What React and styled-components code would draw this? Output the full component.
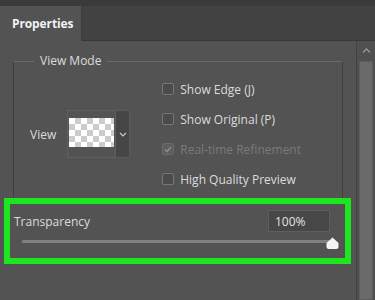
import React from "react";
import styled, { createGlobalStyle } from "styled-components";

const GlobalStyle = createGlobalStyle`
  html, body { margin: 0; padding: 0; background: #535353; }
  body { font-family: "Open Sans", "Noto Sans", sans-serif; }
`;

const Root = styled.div`
  width: 375px;
  height: 300px;
  display: flex;
  flex-direction: column;
  overflow: hidden;
  background: #535353;
  font-family: "Open Sans", "Noto Sans", sans-serif;
  font-size: 12px;
  color: #dcdcdc;
`;

const TopStrip = styled.div`
  height: 6px;
  background: #3a3a3a;
`;

const TabBar = styled.div`
  height: 34px;
  background: #424242;
  border-bottom: 1px solid #383838;
  display: flex;
  align-items: stretch;
`;

const Tab = styled.div`
  width: 82px;
  margin-bottom: -1px;
  background: #535353;
  border-right: 1px solid #3c3c3c;
  display: flex;
  align-items: center;
  padding-left: 12px;
  box-sizing: border-box;
  font-weight: 700;
  font-size: 12px;
  color: #f2f2f2;
  letter-spacing: -0.1px;
`;

const Body = styled.div`
  flex: 1;
  display: flex;
  min-height: 0;
`;

const Content = styled.div`
  flex: 1;
  display: flex;
  flex-direction: column;
  padding-top: 12px;
`;

const Group = styled.fieldset`
  margin: 0 13px 0 13px;
  padding: 0 0 4px 0;
  border: 1px solid #3f3f3f;
  border-top-color: #6a6a6a;
  border-bottom: none;
  min-width: 0;
`;

const Legend = styled.legend`
  margin-left: 20px;
  padding: 0 6px;
  line-height: 16px;
  color: #dcdcdc;
  font-size: 12px;
`;

const GroupInner = styled.div`
  display: flex;
  align-items: center;
  padding: 5px 0 0 16px;
`;

const ViewGroup = styled.div`
  display: flex;
  align-items: center;
  gap: 11px;
`;

const Label = styled.span`
  color: ${(p) => (p.$disabled ? "#7a7a7a" : "#dcdcdc")};
  white-space: nowrap;
`;

const Preview = styled.div`
  display: flex;
  height: 48px;
`;

const Thumb = styled.div`
  width: 49px;
  box-sizing: border-box;
  border: 1px solid #5f5f5f;
  padding: 7px 1px 10px 1px;
  display: flex;
`;

const Checker = styled.div`
  flex: 1;
  background-color: #ffffff;
  background-image: conic-gradient(#cccccc 25%, transparent 0 50%, #cccccc 0 75%, transparent 0);
  background-size: 12px 12px;
`;

const DropButton = styled.div`
  width: 14px;
  box-sizing: border-box;
  background: #464646;
  border: 1px solid #5a5a5a;
  border-left: none;
  display: flex;
  align-items: center;
  justify-content: center;
`;

const CheckList = styled.div`
  margin-left: 32px;
  display: flex;
  flex-direction: column;
`;

const CheckRow = styled.div`
  height: 30px;
  display: flex;
  align-items: center;
  gap: 6px;
`;

const Box = styled.span`
  width: 12px;
  height: 12px;
  box-sizing: border-box;
  border-radius: 2px;
  border: 1px solid ${(p) => (p.$disabled ? "#6a6a6a" : "#767676")};
  background: ${(p) => (p.$disabled ? "#5e5e5e" : "#4b4b4b")};
  display: flex;
  align-items: center;
  justify-content: center;
`;

const Highlight = styled.div`
  margin: 0 5px 0 4px;
  border: 6px solid #1ee61e;
  padding: 6px 12px 9px 4px;
  display: flex;
  flex-direction: column;
  gap: 5px;
`;

const TransRow = styled.div`
  display: flex;
  align-items: center;
  justify-content: space-between;
  padding-right: 3px;
`;

const ValueInput = styled.div`
  width: 62px;
  height: 22px;
  box-sizing: border-box;
  background: #474747;
  border: 1px solid #5e5e5e;
  padding-left: 6px;
  display: flex;
  align-items: center;
  color: #e4e4e4;
`;

const Slider = styled.div`
  position: relative;
  height: 12px;
  margin-left: 8px;
`;

const Track = styled.div`
  position: absolute;
  left: 0;
  right: 0;
  top: 3px;
  height: 3px;
  background: #808080;
  border-radius: 1px;
`;

const Handle = styled.svg`
  position: absolute;
  right: -6px;
  top: 0;
`;

const Scrollbar = styled.div`
  width: 19px;
  box-sizing: border-box;
  border-left: 1px solid #424242;
  background: #505050;
  display: flex;
  flex-direction: column;
  align-items: center;
  padding-top: 7px;
`;

const ThumbBar = styled.div`
  margin-top: 8px;
  width: 14px;
  flex: 1;
  box-sizing: border-box;
  background: #6a6a6a;
  border: 1px solid #5c5c5c;
`;

const Check = ({ label, checked, disabled }) => (
  <CheckRow>
    <Box $disabled={disabled}>
      {checked && (
        <svg width="8" height="7" viewBox="0 0 8 7">
          <path d="M1 3.5 L3 5.5 L7 1" fill="none" stroke="#8c8c8c" strokeWidth="1.6" />
        </svg>
      )}
    </Box>
    <Label $disabled={disabled}>{label}</Label>
  </CheckRow>
);

export default function App() {
  return (
    <Root>
      <GlobalStyle />
      <TopStrip />
      <TabBar>
        <Tab>Properties</Tab>
      </TabBar>
      <Body>
        <Content>
          <Group>
            <Legend>View Mode</Legend>
            <GroupInner>
              <ViewGroup>
                <Label>View</Label>
                <Preview>
                  <Thumb>
                    <Checker />
                  </Thumb>
                  <DropButton>
                    <svg width="8" height="5" viewBox="0 0 8 5">
                      <path d="M1 1 L4 4 L7 1" fill="none" stroke="#cfcfcf" strokeWidth="1.1" />
                    </svg>
                  </DropButton>
                </Preview>
              </ViewGroup>
              <CheckList>
                <Check label="Show Edge (J)" />
                <Check label="Show Original (P)" />
                <Check label="Real-time Refinement" checked disabled />
                <Check label="High Quality Preview" />
              </CheckList>
            </GroupInner>
          </Group>
          <Highlight>
            <TransRow>
              <Label>Transparency</Label>
              <ValueInput>100%</ValueInput>
            </TransRow>
            <Slider>
              <Track />
              <Handle width="13" height="12" viewBox="0 0 13 12">
                <path d="M6.5 0.5 L12.5 6 V9.5 Q12.5 12 10 12 H3 Q0.5 12 0.5 9.5 V6 Z" fill="#f4f4f4" />
              </Handle>
            </Slider>
          </Highlight>
        </Content>
        <Scrollbar>
          <svg width="9" height="5" viewBox="0 0 9 5">
            <path d="M1 4.5 L4.5 1 L8 4.5" fill="none" stroke="#9a9a9a" strokeWidth="1.3" />
          </svg>
          <ThumbBar />
        </Scrollbar>
      </Body>
    </Root>
  );
}
